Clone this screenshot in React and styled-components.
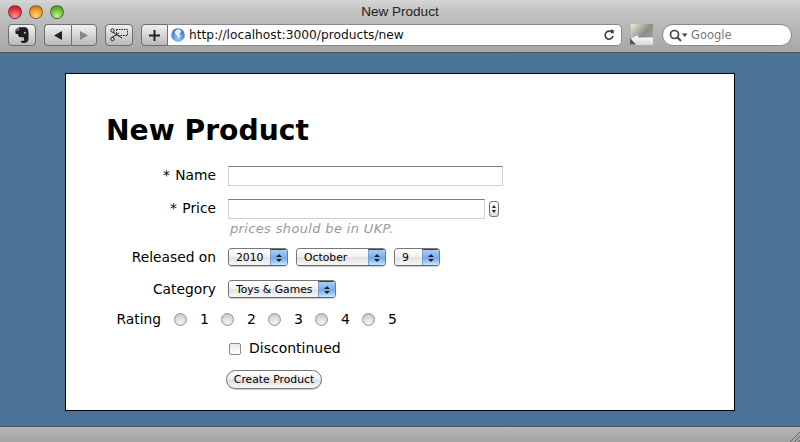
import React from 'react';
import styled, { createGlobalStyle } from 'styled-components';

const Global = createGlobalStyle`
  html, body { margin: 0; padding: 0; height: 100%; overflow: hidden; }
  * { box-sizing: border-box; }
  #root { height: 100%; }
`;

const Win = styled.div`
  width: 800px;
  height: 442px;
  display: flex;
  flex-direction: column;
  background: #4a7299;
  font-family: 'DejaVu Sans', Verdana, sans-serif;
  color: #000;
`;

const Chrome = styled.header`
  height: 53px;
  flex: none;
  background: linear-gradient(#d6d6d6 0, #c4c4c4 20%, #a6a6a6 100%);
  border-bottom: 1px solid #555;
  display: flex;
  flex-direction: column;
`;

const TitleBar = styled.div`
  height: 23px;
  flex: none;
  display: grid;
  grid-template-columns: 1fr auto 1fr;
  align-items: center;
  padding: 0 8px;
`;

const Lights = styled.div`
  display: flex;
  gap: 7px;
`;

const Light = styled.span`
  width: 14px;
  height: 14px;
  border-radius: 50%;
  border: 1px solid rgba(60, 60, 60, 0.55);
  background: radial-gradient(circle at 50% 85%, ${p => p.$glow} 0, ${p => p.$color} 55%, ${p => p.$dark} 100%);
`;

const WinTitle = styled.span`
  font-family: 'Liberation Sans', Arial, sans-serif;
  font-size: 13.5px;
  color: #222;
`;

const Toolbar = styled.div`
  height: 22px;
  margin-top: 1px;
  display: flex;
  align-items: stretch;
  padding: 0 8px;
`;

const ToolBtn = styled.div`
  width: ${p => p.$w}px;
  margin-right: ${p => p.$mr || 0}px;
  flex: none;
  display: flex;
  align-items: center;
  justify-content: center;
  border: 1px solid #6e6e6e;
  border-radius: ${p => p.$radius || '4px'};
  border-right-width: ${p => (p.$joined ? 0 : 1)}px;
  background: linear-gradient(#f2f2f2, #b9b9b9);
`;

const UrlField = styled.div`
  width: 454px;
  flex: none;
  margin-right: 8px;
  display: flex;
  align-items: center;
  gap: 4px;
  padding: 0 6px 0 3px;
  background: #fff;
  border: 1px solid #8a8a8a;
  border-left: 0;
  border-radius: 0 5px 5px 0;
`;

const UrlText = styled.span`
  flex: 1;
  font-family: 'DejaVu Sans', sans-serif;
  font-size: 12.25px;
  color: #111;
`;

const Snap = styled.div`
  width: 23px;
  height: 21px;
  flex: none;
  margin-right: 9px;
`;

const Search = styled.div`
  width: 130px;
  flex: none;
  display: flex;
  align-items: center;
  gap: 3px;
  padding: 0 6px;
  background: #fff;
  border: 1px solid #8a8a8a;
  border-radius: 11px;
  font-family: 'DejaVu Sans', sans-serif;
  font-size: 11.5px;
  color: #777;
`;

const Stage = styled.main`
  flex: 1;
  padding: 20px 65px 0;
`;

const Card = styled.section`
  height: 338px;
  background: #fff;
  border: 1px solid #000;
  padding: 38px 0 0 40px;
`;

const Title = styled.h1`
  margin: 0;
  font-size: 28.2px;
  line-height: 37px;
  height: 36px;
  font-weight: 700;
`;

const Row = styled.div`
  display: flex;
  align-items: center;
  height: ${p => p.$h}px;
  margin-top: ${p => p.$mt}px;
`;

const Label = styled.label`
  width: ${p => p.$w || 110}px;
  flex: none;
  margin-right: ${p => p.$mr || 12}px;
  padding-bottom: ${p => p.$lift || 0}px;
  word-spacing: ${p => (p.$lift ? 1 : 0)}px;
  text-align: right;
  font-size: 13.8px;
  white-space: pre;
`;

const TextBox = styled.input`
  width: ${p => p.$w}px;
  height: 20px;
  padding: 0;
  background: #fff;
  border: 1px solid #cfcfcf;
  border-top: 1px solid #7d7d7d;
`;

const Stepper = styled.span`
  width: 10px;
  height: 16px;
  margin-left: 4px;
  border: 1px solid #777;
  border-radius: 3px;
  display: flex;
  flex-direction: column;
  align-items: center;
  justify-content: center;
  gap: 2px;
  background: linear-gradient(#fff, #ddd);
`;

const Tick = styled.i`
  width: 0;
  height: 0;
  border-left: ${p => p.$size}px solid transparent;
  border-right: ${p => p.$size}px solid transparent;
  ${p => (p.$up ? 'border-bottom' : 'border-top')}: 3px solid #222;
`;

const Hint = styled.em`
  display: block;
  margin-left: 124px;
  height: 19px;
  line-height: 19px;
  font-size: 13px;
  letter-spacing: 0.35px;
  color: #999;
`;

const Select = styled.div`
  width: ${p => p.$w}px;
  height: 18px;
  margin-right: ${p => p.$mr || 0}px;
  flex: none;
  display: flex;
  border: 1px solid #777;
  border-bottom-color: #666;
  border-radius: 4px;
  overflow: hidden;
  font-size: 10.8px;
  box-shadow: 0 1px 1px rgba(0, 0, 0, 0.2);
`;

const SelectText = styled.span`
  flex: 1;
  padding-left: 7px;
  line-height: 17px;
  background: linear-gradient(#fff, #f4f4f4 45%, #e2e2e2 55%, #f8f8f8);
`;

const SelectArrows = styled.span`
  width: 17px;
  flex: none;
  display: flex;
  flex-direction: column;
  align-items: center;
  justify-content: center;
  gap: 2px;
  border-left: 1px solid #7f9cc8;
  border-top: 1px solid #3434a8;
  background: linear-gradient(#a9cdf5, #78b2f0 48%, #6aa9ee 52%, #c6e9ff);
`;

const Radio = styled.input`
  appearance: none;
  width: 13px;
  height: 13px;
  margin: 0 13px 0 0;
  flex: none;
  border: 1px solid #939393;
  border-radius: 50%;
  background: radial-gradient(circle at 50% 80%, #f4f4f4 0, #dcdcdc 50%, #bcbcbc 100%);
`;

const RadioNum = styled.span`
  width: 8px;
  margin-right: 13px;
  flex: none;
  font-size: 14px;
`;

const Check = styled.input`
  appearance: none;
  width: 12px;
  height: 12px;
  margin: 1px 8px 0 1px;
  flex: none;
  border: 1px solid #8a8a8a;
  border-radius: 2px;
  background: linear-gradient(#e8e8e8, #fff);
`;

const CheckLabel = styled.label`
  font-size: 14px;
`;

const Submit = styled.button`
  width: 96px;
  height: 19px;
  margin-left: 120px;
  padding: 0;
  border: 1px solid #777;
  border-radius: 10px;
  background: linear-gradient(#fff, #f2f2f2 45%, #dedede 55%, #f8f8f8);
  font-family: inherit;
  font-size: 10.8px;
  color: #000;
  box-shadow: 0 1px 1px rgba(0, 0, 0, 0.2);
`;

const StatusBar = styled.footer`
  height: 16px;
  flex: none;
  display: flex;
  justify-content: flex-end;
  align-items: flex-end;
  background: linear-gradient(#b6b6b6, #a4a4a4);
  border-top: 1px solid #555;
`;

function Evernote() {
  return (
    <svg width="18" height="18" viewBox="0 0 16 16">
      <path d="M2.5 3 L5 1 H10.5 C12.8 1 13.8 3 13.8 6 V11 C13.8 13.5 12.3 15 10 15 H8.5 C7.3 15 6.8 14 7.3 13 H10 L9.5 10 H7 C5 10 4.5 8.5 4.5 7 H2.5 C2 5.5 2 4 2.5 3 Z" fill="#1e1e1e" />
      <circle cx="10.5" cy="6" r="0.9" fill="#c8c8c8" />
      <path d="M5 1.3 V3.6 H2.7" stroke="#c8c8c8" strokeWidth="0.7" fill="none" />
    </svg>
  );
}

function Triangle({ dir, color }) {
  const d = dir === 'left' ? 'M1 5.5 L9 1 V10 Z' : 'M9 5.5 L1 1 V10 Z';
  return (
    <svg width="10" height="11" viewBox="0 0 10 11">
      <path d={d} fill={color} />
    </svg>
  );
}

function Clipper() {
  return (
    <svg width="18" height="14" viewBox="0 0 18 14" fill="none" stroke="#222">
      <rect x="6.5" y="1.5" width="11" height="6" strokeDasharray="1.5 1" />
      <path d="M1 3 L12 10 M1 10 L9 5" strokeWidth="1" />
      <circle cx="2.5" cy="2.5" r="1.7" fill="#ddd" />
      <circle cx="2.5" cy="11" r="1.7" fill="#ddd" />
    </svg>
  );
}

function Plus() {
  return (
    <svg width="11" height="11" viewBox="0 0 11 11">
      <path d="M4.5 0 H6.5 V4.5 H11 V6.5 H6.5 V11 H4.5 V6.5 H0 V4.5 H4.5 Z" fill="#222" />
    </svg>
  );
}

function Globe() {
  return (
    <svg width="14" height="14" viewBox="0 0 14 14" style={{ flex: 'none' }}>
      <defs>
        <radialGradient id="sea" cx="0.5" cy="0.75" r="0.8">
          <stop offset="0" stopColor="#9ac8f5" />
          <stop offset="1" stopColor="#2a62b8" />
        </radialGradient>
      </defs>
      <circle cx="7" cy="7" r="6.8" fill="url(#sea)" />
      <path d="M6 1.5 C8 1 10 2 10.5 3.5 L8.5 5.5 L9.5 8 L7.5 10.5 L6.5 8 L4.5 6.5 L3.5 4 Z" fill="#e6eef8" />
    </svg>
  );
}

function Reload() {
  return (
    <svg width="12" height="12" viewBox="0 0 12 12" fill="none">
      <path d="M9.6 4.2 A4 4 0 1 0 10 7" stroke="#444" strokeWidth="1.7" />
      <path d="M7 0.5 L10.8 1 V5 Z" fill="#444" />
    </svg>
  );
}

function SnapBack() {
  return (
    <svg width="23" height="21" viewBox="0 0 23 21">
      <defs>
        <linearGradient id="snap" x1="0" y1="0" x2="1" y2="0.6">
          <stop offset="0" stopColor="#e6eedb" />
          <stop offset="0.7" stopColor="#8b8f86" />
          <stop offset="1" stopColor="#9a9a9a" />
        </linearGradient>
        <linearGradient id="snapFade" x1="0" y1="0" x2="0" y2="1">
          <stop offset="0" stopColor="#ffffff" />
          <stop offset="1" stopColor="#d8d8d8" />
        </linearGradient>
      </defs>
      <rect x="1" width="22" height="15" fill="url(#snap)" />
      <path d="M1 14.5 L8 11 V13.5 H23 V21 H1 Z" fill="url(#snapFade)" />
      <path d="M0 14 L6 20.5 H0 Z" fill="#555" />
    </svg>
  );
}

function Magnifier() {
  return (
    <svg width="19" height="13" viewBox="0 0 19 13" fill="none" style={{ flex: 'none' }}>
      <circle cx="5.5" cy="5.5" r="4" stroke="#444" strokeWidth="1.7" />
      <path d="M8.5 8.5 L12 12" stroke="#444" strokeWidth="2" />
      <path d="M13 4.5 H18.5 L15.7 8 Z" fill="#444" />
    </svg>
  );
}

function Grip() {
  return (
    <svg width="11" height="11" viewBox="0 0 11 11" stroke="#666">
      <path d="M1 11 L11 1 M5 11 L11 5 M9 11 L11 9" />
    </svg>
  );
}

function SelectBox({ w, mr, children }) {
  return (
    <Select $w={w} $mr={mr}>
      <SelectText>{children}</SelectText>
      <SelectArrows>
        <Tick $up $size={3} />
        <Tick $size={3} />
      </SelectArrows>
    </Select>
  );
}

export default function App() {
  return (
    <Win>
      <Global />
      <Chrome>
        <TitleBar>
          <Lights>
            <Light $color="#e8353a" $dark="#a51c20" $glow="#ff9a9a" />
            <Light $color="#f39a1e" $dark="#c0680f" $glow="#ffdc8a" />
            <Light $color="#6cc03c" $dark="#3f8a22" $glow="#c6f29a" />
          </Lights>
          <WinTitle>New Product</WinTitle>
          <span />
        </TitleBar>
        <Toolbar>
          <ToolBtn $w={28} $mr={8}><Evernote /></ToolBtn>
          <ToolBtn $w={27} $radius="4px 0 0 4px" $joined><Triangle dir="left" color="#222" /></ToolBtn>
          <ToolBtn $w={26} $mr={8} $radius="0 4px 4px 0"><Triangle dir="right" color="#888" /></ToolBtn>
          <ToolBtn $w={28} $mr={8}><Clipper /></ToolBtn>
          <ToolBtn $w={27} $radius="4px 0 0 4px"><Plus /></ToolBtn>
          <UrlField>
            <Globe />
            <UrlText>http://localhost:3000/products/new</UrlText>
            <Reload />
          </UrlField>
          <Snap><SnapBack /></Snap>
          <Search><Magnifier />Google</Search>
        </Toolbar>
      </Chrome>
      <Stage>
        <Card>
          <Title>New Product</Title>
          <Row $h={20} $mt={18}>
            <Label $lift={2}>* Name</Label>
            <TextBox $w={275} />
          </Row>
          <Row $h={20} $mt={13}>
            <Label $lift={2}>* Price</Label>
            <TextBox $w={257} />
            <Stepper><Tick $up $size={2} /><Tick $size={2} /></Stepper>
          </Row>
          <Hint>prices should be in UKP.</Hint>
          <Row $h={18} $mt={10}>
            <Label>Released on</Label>
            <SelectBox w={60} mr={8}>2010</SelectBox>
            <SelectBox w={90} mr={8}>October</SelectBox>
            <SelectBox w={46}>9</SelectBox>
          </Row>
          <Row $h={18} $mt={14}>
            <Label>Category</Label>
            <SelectBox w={108}>Toys &amp; Games</SelectBox>
          </Row>
          <Row $h={18} $mt={12}>
            <Label $w={55} $mr={13}>Rating</Label>
            {[1, 2, 3, 4, 5].map(n => (
              <React.Fragment key={n}>
                <Radio type="radio" name="rating" />
                <RadioNum>{n}</RadioNum>
              </React.Fragment>
            ))}
          </Row>
          <Row $h={18} $mt={11}>
            <Label />
            <Check type="checkbox" />
            <CheckLabel>Discontinued</CheckLabel>
          </Row>
          <Row $h={19} $mt={13}>
            <Submit type="button">Create Product</Submit>
          </Row>
        </Card>
      </Stage>
      <StatusBar><Grip /></StatusBar>
    </Win>
  );
}
